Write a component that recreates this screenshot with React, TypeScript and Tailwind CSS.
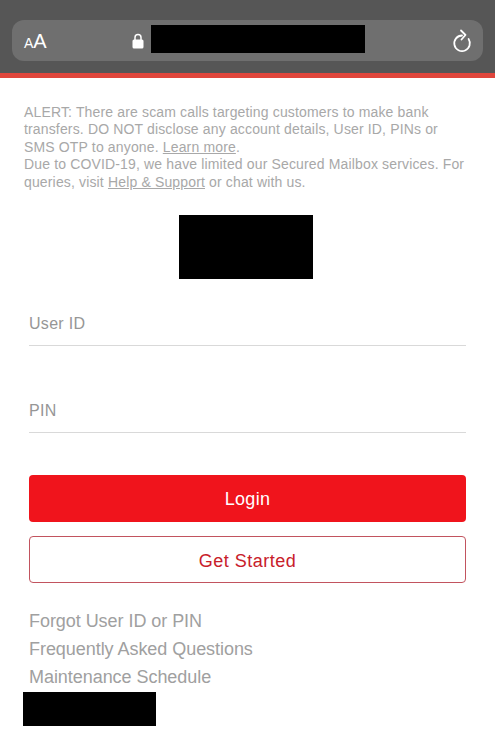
export default function App() {
  return (
    <div className="w-[495px] h-[748px] overflow-hidden bg-white font-['Liberation_Sans',Arial,sans-serif]">
      {/* Browser bar */}
      <div className="h-[78px] bg-[#565656] border-b-[5px] border-[#e0463c] px-3 pt-5">
        <div className="h-[41px] rounded-xl bg-[#6f6f6f] flex items-center pl-3 pr-2 text-white">
          <span className="w-[108px] leading-none">
            <span className="text-[14px]">A</span>
            <span className="text-[20px]">A</span>
          </span>
          <svg width="12" height="16" viewBox="0 0 12 16" className="shrink-0">
            <path d="M3 7V4.5a3 3 0 0 1 6 0V7" fill="none" stroke="white" strokeWidth="1.5" />
            <rect x="0.5" y="6.5" width="11" height="9" rx="1.5" fill="white" />
          </svg>
          <div className="w-[214px] h-7 bg-black ml-[7px] -mt-1" />
          <svg width="20" height="24" viewBox="0 0 20 24" fill="none" stroke="white" strokeWidth="1.8" strokeLinecap="round" strokeLinejoin="round" className="ml-auto mr-[3px]">
            <path d="M10 6.5A7.8 7.8 0 1 0 16.6 10" />
            <path d="M9 1.5L13.5 6L9.5 10.5" />
          </svg>
        </div>
      </div>

      {/* Alert */}
      <div className="px-6 pt-[25.5px] text-[14px] leading-[17.6px] tracking-[0.15px] text-[#a8a8a8]">
        <p>
          ALERT: There are scam calls targeting customers to make bank transfers. DO NOT disclose any account details, User ID, PINs or SMS OTP to anyone. <span className="underline">Learn more</span>.
        </p>
        <p>
          Due to COVID-19, we have limited our Secured Mailbox services. For queries, visit <span className="underline">Help &amp; Support</span> or chat with us.
        </p>
      </div>

      {/* Logo block */}
      <div className="w-[134px] h-16 bg-black ml-[179px] mt-[24px]" />

      {/* Form */}
      <div className="px-[29px]">
        <div className="h-[67px] border-b border-[#d9d9d9] flex items-end pb-[9px] text-[16px] tracking-[0.3px] text-[#969696]">User ID</div>
        <div className="h-[87px] border-b border-[#d9d9d9] flex items-end pb-[9px] text-[16px] tracking-[0.3px] text-[#969696]">PIN</div>

        <button className="w-full h-[47px] mt-[42px] pt-[2px] rounded bg-[#f0141c] text-white text-[18px] tracking-[0.3px] flex items-center justify-center">
          Login
        </button>
        <button className="w-full h-[47px] mt-[14px] pt-[3px] rounded border border-[#c2545f] bg-white text-[#c8202a] text-[18px] tracking-[0.5px] flex items-center justify-center">
          Get Started
        </button>

        <div className="mt-[24px] flex flex-col text-[18px] leading-[28px] tracking-[-0.05px] text-[#a0a0a0]">
          <span>Forgot User ID or PIN</span>
          <span>Frequently Asked Questions</span>
          <span>Maintenance Schedule</span>
        </div>
      </div>
      <div className="w-[133px] h-[34px] bg-black ml-[23px] mt-[1px]" />
    </div>
  );
}
